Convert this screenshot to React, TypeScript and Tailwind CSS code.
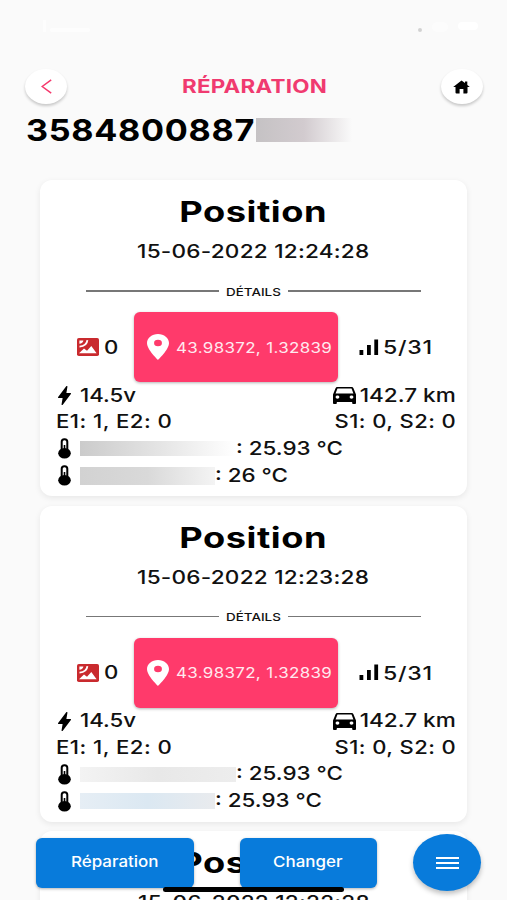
import React from 'react';
import { MdLocationOn, MdDirectionsCar } from 'react-icons/md';
import { IoFlash } from 'react-icons/io5';

interface Sensor {
  value: string;
  maskClass: string;
}

interface PositionEntry {
  id: number;
  date: string;
  sensors: Sensor[];
}

const entries: PositionEntry[] = [
  {
    id: 1,
    date: '15-06-2022 12:24:28',
    sensors: [
      { value: ': 25.93 °C', maskClass: 'w-[156px] h-[15px] bg-linear-to-r from-[#cbcbcb] via-[#e4e4e4] to-white' },
      { value: ': 26 °C', maskClass: 'w-[135px] h-[18px] bg-linear-to-r from-[#d2d2d2] via-[#d9d9d9] to-[#f4f4f4]' },
    ],
  },
  {
    id: 2,
    date: '15-06-2022 12:23:28',
    sensors: [
      { value: ': 25.93 °C', maskClass: 'w-[156px] h-[15px] bg-linear-to-r from-[#f3f3f3] via-[#e8e8e8] to-[#ededed]' },
      { value: ': 25.93 °C', maskClass: 'w-[135px] h-[16px] bg-linear-to-r from-[#e6eef5] via-[#dbe8f2] to-[#e9ebee]' },
    ],
  },
  {
    id: 3,
    date: '15-06-2022 12:22:28',
    sensors: [],
  },
];

const SignalBars: React.FC = () => (
  <svg width="20" height="17" viewBox="0 0 20 17" className="shrink-0">
    <rect x="0.5" y="11" width="3.8" height="5" />
    <rect x="8" y="6" width="3.8" height="10" />
    <rect x="15.3" y="0.5" width="3.8" height="15.5" />
  </svg>
);

const SatelliteIcon: React.FC = () => (
  <svg width="22" height="18" viewBox="0 0 22 18" className="shrink-0">
    <rect width="22" height="18" rx="1.8" fill="#c92a2e" />
    <path d="M2 15.2 L7 10.4 L10 12.8 L14.3 8 L19.6 15.2 Z" fill="#fff" />
    <path d="M2.5 8.6 C7 8.4 10 6 10.4 2.2" stroke="#fff" strokeWidth="1.8" fill="none" />
    <path d="M2.4 2.4 H6.4 C6.2 4.4 4.6 5.6 2.4 5.7 Z" fill="#fff" />
  </svg>
);

const ThermometerIcon: React.FC = () => (
  <svg width="13" height="21" viewBox="0 0 13 21" className="shrink-0">
    <rect x="3.7" y="1.2" width="5.6" height="14" rx="2.6" fill="#fff" stroke="#000" strokeWidth="2" />
    <path d="M6.5 7 V14" stroke="#000" strokeWidth="1.6" />
    <ellipse cx="6.5" cy="15.3" rx="6.3" ry="5.2" />
  </svg>
);

const HomeIcon: React.FC = () => (
  <svg width="17" height="14" viewBox="0 0 17 14">
    <path d="M8.5 0.4 L12 3.1 V1.6 H14.3 V4.9 L16.8 7.1 H14.5 V12.5 Q14.5 13.4 13.5 13.4 H10.4 V8.9 H6.6 V13.4 H3.5 Q2.5 13.4 2.5 12.5 V7.1 H0.2 Z" />
  </svg>
);

const BackIcon: React.FC = () => (
  <svg width="11" height="15" viewBox="0 0 11 15">
    <path d="M10.2 0.9 L1.2 7.5 L10.2 14.1" fill="none" stroke="#f5386c" strokeWidth="1.5" />
  </svg>
);

const PositionCard: React.FC<{ entry: PositionEntry }> = ({ entry }) => (
  <div className="h-[316px] shrink-0 rounded-xl bg-white shadow-[0_2px_6px_rgba(0,0,0,0.08)]">
    {/* Title */}
    <div className="flex flex-col items-center pt-3">
      <h2 className="h-10 origin-center scale-x-[1.25] text-[29px] leading-10 font-bold tracking-[0.015em] text-black">Position</h2>
      <p className="mt-1 h-[30px] origin-center scale-x-[1.22] text-[18.5px] leading-[30px] font-medium tracking-[0.01em]">{entry.date}</p>
    </div>

    {/* Divider */}
    <div className="mt-[15px] flex h-5 items-center px-[46px]">
      <div className="h-[1.5px] w-[133px] bg-[#777]" />
      <div className="flex flex-1 justify-center pt-0.5">
        <span className="scale-x-[1.22] text-[11px] font-medium">DÉTAILS</span>
      </div>
      <div className="h-[1.5px] w-[133px] bg-[#777]" />
    </div>

    {/* GPS line */}
    <div className="mt-[11px] flex h-[70px] items-center pl-[37px] text-[18.5px] font-medium">
      <SatelliteIcon />
      <span className="mt-px ml-[5px] w-[30px] origin-left scale-x-[1.2]">0</span>
      <button className="flex h-[70px] w-[204px] items-center rounded-md bg-[#ff3a6b] pl-[13px] text-white shadow-[0_1px_3px_rgba(0,0,0,0.3)]">
        <MdLocationOn viewBox="5 2 14 20" preserveAspectRatio="none" className="h-[26px] w-[22px]" />
        <span className="ml-[7px] origin-left scale-x-[1.21] text-[14px] font-normal tracking-[0.02em] whitespace-nowrap text-[#ffe9ef]">43.98372, 1.32839</span>
      </button>
      <div className="ml-[21px] flex items-center">
        <SignalBars />
        <span className="mt-0.5 ml-[4px] origin-left scale-x-[1.25] tracking-[0.03em]">5/31</span>
      </div>
    </div>

    {/* Readings */}
    <div className="flex flex-col pr-[11px] pl-4 text-[18.5px] font-medium">
      <div className="flex h-[27px] items-center justify-between">
        <div className="flex items-center">
          <IoFlash viewBox="80 16 352 480" preserveAspectRatio="none" className="ml-0.5 h-[19px] w-[13px] text-black" />
          <span className="ml-[9px] origin-left scale-x-[1.2]">14.5v</span>
        </div>
        <div className="flex items-center">
          <MdDirectionsCar viewBox="3 5 18 16" preserveAspectRatio="none" className="h-[17px] w-[23px] text-black" />
          <span className="ml-[21px] origin-right scale-x-[1.22]">142.7 km</span>
        </div>
      </div>
      <div className="flex h-[26px] items-center justify-between">
        <span className="origin-left scale-x-[1.2] tracking-[0.02em]">E1: 1, E2: 0</span>
        <span className="origin-right scale-x-[1.19] tracking-[0.02em]">S1: 0, S2: 0</span>
      </div>
      {entry.sensors.map((sensor, i) => (
        <div key={i} className="flex h-[27px] items-center">
          <div className="ml-0.5">
            <ThermometerIcon />
          </div>
          <div className={`ml-[9px] shrink-0 ${sensor.maskClass}`} />
          <span className="origin-left scale-x-[1.21] whitespace-nowrap">{sensor.value}</span>
        </div>
      ))}
    </div>
  </div>
);

export default function App() {
  return (
    <div className="flex h-[900px] w-[507px] flex-col overflow-hidden bg-[#fafafa] font-['Inter',sans-serif] text-[#111]">
      {/* Status bar */}
      <div className="flex h-[69px] shrink-0 items-start justify-between pt-5 pr-[29px] pl-[43px]">
        <div className="flex h-3 items-end gap-1">
          <div className="h-3 w-[3px] bg-[#fdfdfd]" />
          <div className="h-1 w-10 rounded-sm bg-[#fdfdfd]" />
        </div>
        <div className="flex h-3 items-end gap-2.5">
          <div className="h-1 w-1 rounded-full bg-[#d2d2d2]" />
          <div className="h-2.5 w-4 rounded-full bg-[#fcfcfc]" />
          <div className="mb-0.5 h-2 w-5 rounded-sm bg-white" />
        </div>
      </div>

      {/* Header */}
      <header className="flex items-center justify-between pr-6 pl-[25px]">
        <button className="flex h-[35px] w-[42px] items-center justify-center rounded-[50%] bg-white shadow-[0_2px_3px_rgba(0,0,0,0.2)]">
          <BackIcon />
        </button>
        <h1 className="mt-0.5 scale-x-[1.18] text-[19px] font-bold tracking-[0.01em] text-[#f03a70]">RÉPARATION</h1>
        <button className="flex h-[35px] w-[42px] items-center justify-center rounded-[50%] bg-white text-black shadow-[0_2px_3px_rgba(0,0,0,0.2)]">
          <HomeIcon />
        </button>
      </header>

      {/* Device number */}
      <div className="flex h-[52px] shrink-0 items-center pl-[26px]">
        <div className="w-[230px] shrink-0">
          <span className="inline-block origin-left scale-x-[1.14] text-[30px] leading-9 font-bold tracking-[0.02em] text-black">3584800887</span>
        </div>
        <div className="h-6 w-[96px] bg-linear-to-r from-[#c5c2c4] via-[#d2cbcf] to-[#fafafa]" />
      </div>

      {/* Positions */}
      <main className="mt-6 flex flex-col gap-[9.5px] px-10">
        {entries.map((entry) => (
          <PositionCard key={entry.id} entry={entry} />
        ))}
      </main>

      {/* Floating actions */}
      <div className="absolute top-[834px] left-0 flex w-[507px] items-center pl-9 text-[15px] font-medium text-white">
        <button className="h-[50px] w-[158px] rounded-md bg-[#087bdb] shadow-[0_1px_3px_rgba(0,0,0,0.3)]">
          <span className="inline-block scale-x-[1.13]">Réparation</span>
        </button>
        <button className="ml-[46px] h-[50px] w-[137px] rounded-md bg-[#087bdb] pr-0.5 shadow-[0_1px_3px_rgba(0,0,0,0.3)]">
          <span className="inline-block scale-x-[1.13]">Changer</span>
        </button>
        <button className="ml-9 flex h-[57px] w-[68px] flex-col items-center justify-center gap-[3px] rounded-[50%] bg-[#087bdb] shadow-[0_3px_5px_rgba(0,0,0,0.25)]">
          <span className="h-[2px] w-[23px] bg-white" />
          <span className="h-[2px] w-[23px] bg-white" />
          <span className="h-[2px] w-[23px] bg-white" />
        </button>
      </div>
      <div className="absolute top-[887px] left-[163px] h-[5px] w-[181px] rounded-full bg-black" />
    </div>
  );
}
